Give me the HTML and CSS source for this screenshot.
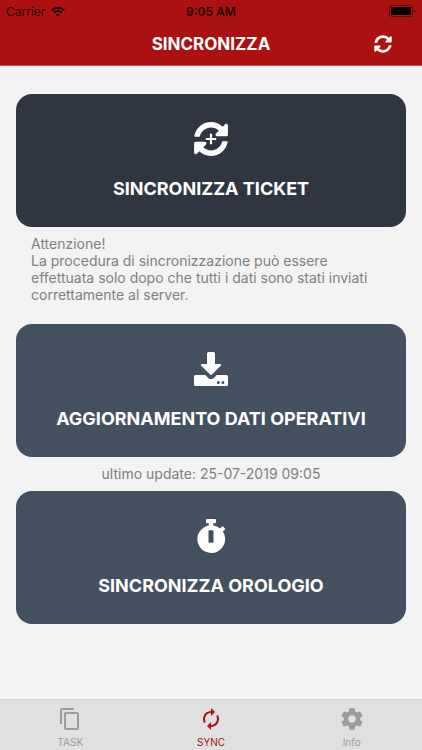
FILE: index.html
```html
<!DOCTYPE html>
<html lang="it">
<head>
<meta charset="utf-8">
<meta name="viewport" content="width=device-width, initial-scale=1">
<title>Sincronizza</title>
<link rel="stylesheet" href="styles.css">
</head>
<body>
<header class="header">
  <div class="status">
    <div class="carrier">
      <span>Carrier</span>
      <svg width="14" height="11" viewBox="0 0 14 11" fill="none" stroke="currentColor" stroke-width="2" aria-hidden="true">
        <path d="M.8 4.2a8.800 8.800 0 0 1 12.400 0M3.100 6.600a5.500 5.500 0 0 1 7.800 0"/>
        <path d="M7 10.600 4.900 8.500a3 3 0 0 1 4.200 0z" fill="currentColor" stroke="none"/>
      </svg>
    </div>
    <span class="clock">9:05 AM</span>
    <svg class="battery" width="27" height="12" viewBox="0 0 27 12" aria-hidden="true">
      <rect x=".5" y=".5" width="23" height="11" rx="2.5" fill="none" stroke="#000" stroke-opacity=".4"/>
      <rect x="2" y="2" width="20" height="8" rx="1"/>
      <path d="M25 4v4c.9-.3 1.500-1.100 1.500-2s-.6-1.700-1.500-2z" fill-opacity=".4"/>
    </svg>
  </div>
  <div class="titlebar">
    <h1>SINCRONIZZA</h1>
    <button class="refresh" type="button" aria-label="Aggiorna">
      <svg width="18" height="18" viewBox="0 0 512 512" fill="currentColor"><use href="#sync"/></svg>
    </button>
  </div>
</header>

<main class="content">
  <button class="card card-dark" type="button">
    <svg width="36" height="36" viewBox="-8 -8 528 528" fill="currentColor" aria-hidden="true">
      <path id="sync" d="M370.72 133.28C339.458 104.008 298.888 87.962 255.848 88c-77.458.068-144.328 53.178-162.791 126.850-1.344 5.363-6.122 9.150-11.651 9.150H24.103c-7.498 0-13.194-6.807-11.807-14.176C33.933 94.924 134.813 8 256 8c66.448 0 126.791 26.136 171.315 68.685L463.030 40.970C478.149 25.851 504 36.559 504 57.941V192c0 13.255-10.745 24-24 24H345.941c-21.382 0-32.090-25.851-16.971-40.971l41.750-41.749zM32 296h134.059c21.382 0 32.090 25.851 16.971 40.971l-41.750 41.750c31.262 29.273 71.835 45.319 114.876 45.280 77.418-.070 144.315-53.144 162.787-126.849 1.344-5.363 6.122-9.150 11.651-9.150h57.304c7.498 0 13.194 6.807 11.807 14.176C478.067 417.076 377.187 504 256 504c-66.448 0-126.791-26.136-171.315-68.685L48.970 471.030C33.851 486.149 8 475.441 8 454.059V320c0-13.255 10.745-24 24-24z"/>
      <path d="M240 180h32v60h60v32h-60v60h-32v-60h-60v-32h60z"/>
    </svg>
    <span>SINCRONIZZA TICKET</span>
  </button>
  <p class="note">Attenzione!<br>La procedura di sincronizzazione può essere effettuata solo dopo che tutti i dati sono stati inviati correttamente al server.</p>

  <button class="card" type="button">
    <svg width="36" height="36" viewBox="0 0 36 36" fill="currentColor" aria-hidden="true">
      <path d="M15.500 1h5q1.500 0 1.500 1.500V13h5q2.200 0 .8 1.700l-8.600 8.600q-1.200 1.200-2.400 0l-8.600-8.600Q6.800 13 9 13h5V2.500Q14 1 15.500 1z"/>
      <path fill-rule="evenodd" d="M2.600 24h9.700l2.900 2.900q2.800 2.400 5.600 0l2.900-2.900h9.700q1.600 0 1.600 1.600v7.800q0 1.600-1.600 1.600H2.600Q1 35 1 33.400v-7.800Q1 24 2.600 24zM25.300 30a1.500 1.500 0 1 0 0 3 1.500 1.500 0 0 0 0-3zM29.900 30a1.500 1.500 0 1 0 0 3 1.500 1.500 0 0 0 0-3z"/>
    </svg>
    <span>AGGIORNAMENTO DATI OPERATIVI</span>
  </button>
  <p class="note note-center">ultimo update: 25-07-2019 09:05</p>

  <button class="card" type="button">
    <svg width="36" height="36" viewBox="0 0 36 36" fill="currentColor" aria-hidden="true">
      <path fill-rule="evenodd" d="M14 1h8q1 0 1 1v2.200q0 1-1 1h-1.800v2.200q4 .7 7 3l1.700-1.700q.7-.7 1.400 0l1.500 1.500q.7.7 0 1.400l-1.900 1.900A13.900 13.900 0 1 1 15.800 7.400V5.200H14q-1 0-1-1V2q0-1 1-1zm2.300 11.300q-.8 0-.8.800v10.800q0 .8.8.8h3.400q.8 0 .8-.8V13.100q0-.8-.8-.8z"/>
    </svg>
    <span>SINCRONIZZA OROLOGIO</span>
  </button>
</main>

<nav class="tabs">
  <a class="tab" href="#task">
    <svg width="26" height="26" viewBox="-1 -1 26 26" fill="currentColor" aria-hidden="true"><path d="M16 1H4c-1.100 0-2 .9-2 2v14h2V3h12V1zm3 4H8c-1.100 0-2 .9-2 2v14c0 1.100.9 2 2 2h11c1.100 0 2-.9 2-2V7c0-1.100-.9-2-2-2zm0 16H8V7h11v14z"/></svg>
    <span>TASK</span>
  </a>
  <a class="tab tab-active" href="#sync-page" aria-current="page">
    <svg width="26" height="26" viewBox="-1 -1 26 26" fill="currentColor" aria-hidden="true"><path d="M12 6v3l4-4-4-4v3c-4.420 0-8 3.580-8 8 0 1.570.46 3.030 1.240 4.260L6.700 14.800c-.45-.83-.7-1.790-.7-2.800 0-3.310 2.690-6 6-6zm6.760 1.740L17.300 9.200c.44.84.7 1.790.7 2.800 0 3.310-2.690 6-6 6v-3l-4 4 4 4v-3c4.420 0 8-3.580 8-8 0-1.570-.46-3.030-1.240-4.260z"/></svg>
    <span>SYNC</span>
  </a>
  <a class="tab" href="#info">
    <svg width="26" height="26" viewBox="0 0 24 24" fill="currentColor" aria-hidden="true"><path d="M19.430 12.980c.04-.32.070-.64.070-.98s-.03-.66-.07-.98l2.110-1.650c.19-.15.240-.42.120-.64l-2-3.460c-.12-.22-.39-.3-.61-.22l-2.490 1c-.52-.4-1.080-.73-1.690-.98l-.38-2.650C14.460 2.180 14.250 2 14 2h-4c-.25 0-.46.180-.49.420l-.38 2.650c-.61.250-1.170.590-1.690.980l-2.490-1c-.23-.09-.49 0-.61.220l-2 3.460c-.13.220-.07.490.120.640l2.110 1.650c-.04.320-.07.650-.07.980s.03.660.07.980l-2.110 1.650c-.19.150-.24.420-.12.640l2 3.460c.12.220.39.300.61.220l2.490-1c.52.400 1.080.730 1.690.980l.38 2.650c.03.240.24.420.49.420h4c.25 0 .46-.18.49-.42l.38-2.650c.61-.25 1.170-.59 1.690-.98l2.490 1c.23.090.49 0 .61-.22l2-3.460c.12-.22.070-.49-.12-.64l-2.110-1.650zM12 15.500c-1.930 0-3.500-1.570-3.500-3.500s1.570-3.500 3.500-3.500 3.500 1.570 3.500 3.500-1.570 3.500-3.500 3.500z"/></svg>
    <span>Info</span>
  </a>
</nav>
</body>
</html>
```
FILE: styles.css
```css
* {
  box-sizing: border-box;
}

body {
  margin: 0;
  min-height: 100vh;
  display: flex;
  flex-direction: column;
  background: #f3f3f3;
  font-family: Inter, "Liberation Sans", sans-serif;
}

button {
  border: 0;
  padding: 0;
  font: inherit;
  color: inherit;
  background: none;
}

svg {
  display: block;
}

.header {
  background: #ab1111;
  border-bottom: 1px solid #c85050;
}

.status {
  display: grid;
  grid-template-columns: 1fr auto 1fr;
  align-items: center;
  height: 22px;
  padding: 0 6px;
  font-size: 12px;
  color: #260203;
}

.carrier {
  display: flex;
  align-items: center;
  gap: 6px;
}

.clock {
  font-weight: 600;
}

.battery {
  justify-self: end;
}

.titlebar {
  display: grid;
  grid-template-columns: 1fr auto 1fr;
  align-items: center;
  height: 43px;
  padding: 0 30px;
  color: #fff;
}

.titlebar h1 {
  grid-column: 2;
  margin: 0;
  font-size: 17px;
  font-weight: 700;
}

.refresh {
  justify-self: end;
}

.content {
  flex: 1;
  padding: 28px 16px;
}

.card {
  display: flex;
  flex-direction: column;
  align-items: center;
  gap: 20px;
  width: 100%;
  padding: 27px 16px 26px;
  border-radius: 16px;
  background: #435060;
  color: #fff;
  font-size: 18px;
  line-height: 24px;
  font-weight: 700;
}

.card-dark {
  background: #2f3642;
}

.note {
  margin: 8px 15px 21px;
  font-size: 14px;
  line-height: 17px;
  color: #808080;
}

.note-center {
  margin-bottom: 9px;
  text-align: center;
}

.tabs {
  display: grid;
  grid-template-columns: repeat(3, 1fr);
  height: 51px;
  background: #e0e0e0;
  border-top: 1px solid #cfcfcf;
}

.tab {
  display: flex;
  flex-direction: column;
  align-items: center;
  gap: 3px;
  padding-top: 6px;
  font-size: 10px;
  line-height: 14px;
  color: #9c9c9c;
  text-decoration: none;
}

.tab-active {
  color: #ab1111;
}
```
